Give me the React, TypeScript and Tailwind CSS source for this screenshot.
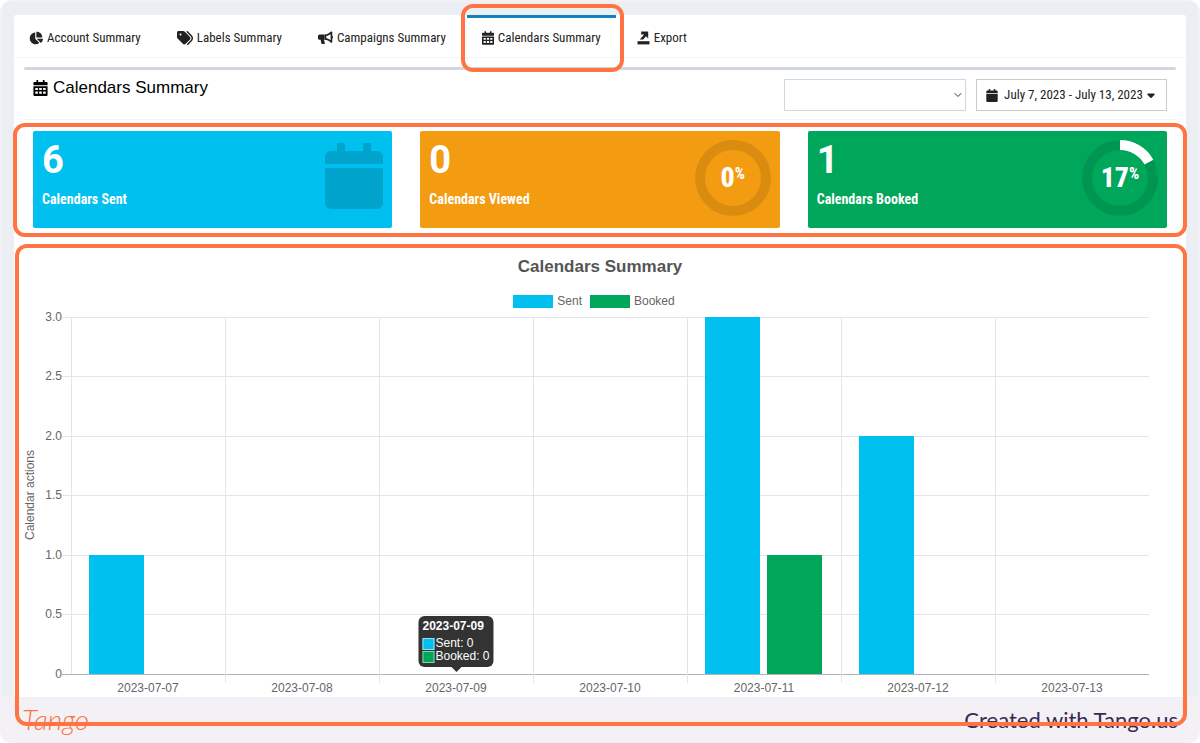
import React from "react";
import { FaBullhorn, FaCaretDown, FaChartPie, FaTags } from "react-icons/fa6";
import { FiChevronDown } from "react-icons/fi";

const condensed = "font-['Roboto_Condensed','Liberation_Sans_Narrow',Roboto,sans-serif]";

function ExportIcon() {
  return (
    <svg viewBox="0 0 13 14" className="h-3.5 w-[13px]" fill="currentColor" aria-hidden="true">
      <path d="M0.5 10.2h12v3.2h-12z" />
      <path d="M4.2 0.4h7v7L9 5.3 6.2 8.6H2.8l4.3-5.2H4.2z" />
    </svg>
  );
}

function BullhornIcon() {
  return <FaBullhorn className="size-3.5 -scale-x-100" />;
}

function MegaphoneIcon() {
  return (
    <svg viewBox="0 0 15 14" className="h-3.5 w-[15px]" fill="currentColor" aria-hidden="true">
      <path d="M1.6 3.4h5v5.4H6l.8 3.3a.8.8 0 0 1-.8 1H4.3a.9.9 0 0 1-.9-.7L2.6 8.8h-1A1.6 1.6 0 0 1 0 7.2V5a1.6 1.6 0 0 1 1.600-1.6z" />
      <path
        fillRule="evenodd"
        d="M6.600 3.400C9 3.400 11 2.300 12.600.700a1 1 0 0 1 1.700.7v3.500a1.400 1.400 0 0 1 0 2.500v3.400a1 1 0 0 1-1.700.7C11 9.900 9 8.800 6.600 8.800zM8.300 5v2.300c1.600.2 3.100.9 4.300 1.900V3.100C11.400 4.100 9.900 4.800 8.300 5z"
      />
    </svg>
  );
}

function CalendarGridIcon({ className }: { className: string }) {
  return (
    <svg viewBox="0 0 15 17" className={className} fill="currentColor" aria-hidden="true">
      <path
        fillRule="evenodd"
        d="M3.2 0h1.8v2h5V0h1.8v2h2.2a1 1 0 0 1 1 1v2.7H0V3a1 1 0 0 1 1-1h2.2zM0 6.7h15V16a1 1 0 0 1-1 1H1a1 1 0 0 1-1-1zM2 8.4v2.3h2.7V8.4zM6.1 8.4v2.3h2.8V8.4zM10.3 8.4v2.3H13V8.4zM2 12.3v2.4h2.7v-2.4zM6.1 12.3v2.4h2.8v-2.4zM10.3 12.3v2.4H13v-2.4z"
      />
    </svg>
  );
}

function CalendarIcon({ className }: { className: string }) {
  return (
    <svg viewBox="0 0 58 66" className={className} fill="currentColor" aria-hidden="true">
      <path d="M13 0h6a1 1 0 0 1 1 1v7h18V1a1 1 0 0 1 1-1h6a1 1 0 0 1 1 1v7h6a6 6 0 0 1 6 6v7H0v-7a6 6 0 0 1 6-6h6V1a1 1 0 0 1 1-1zM0 25h58v35a6 6 0 0 1-6 6H6a6 6 0 0 1-6-6z" />
    </svg>
  );
}

function Highlight({ className }: { className: string }) {
  return (
    <div
      aria-hidden="true"
      className={`pointer-events-none absolute z-10 rounded-xl border-4 border-[#ff7442] ${className}`}
    />
  );
}

const tabs = [
  { label: "Account Summary", icon: <FaChartPie className="size-3.5" /> },
  { label: "Labels Summary", icon: <FaTags className="size-4" /> },
  { label: "Campaigns Summary", icon: <MegaphoneIcon /> },
  { label: "Calendars Summary", icon: <CalendarGridIcon className="h-3.5 w-3" />, active: true },
  { label: "Export", icon: <ExportIcon /> },
];

function Tabs() {
  return (
    <nav className="flex gap-[6px] border-b border-[#f4f4f4]">
      {tabs.map((tab) => (
        <div key={tab.label} className="relative">
          <a
            href="#"
            aria-current={tab.active ? "page" : undefined}
            className={`flex h-[42px] items-center gap-1 border-t-3 px-[15px] text-[13px] whitespace-nowrap text-[#222] ${
              tab.active ? "-mb-px border-t-[#1182bd] bg-white" : "border-t-transparent"
            }`}
          >
            {tab.icon}
            {tab.label}
          </a>
          {tab.active && <Highlight className="-top-[11px] -right-2 -bottom-[15px] -left-[6px]" />}
        </div>
      ))}
    </nav>
  );
}

function Gauge({ percent }: { percent: number }) {
  const length = 2 * Math.PI * 33;
  return (
    <div className="relative size-[76px]">
      <svg viewBox="0 0 76 76" className="size-full -rotate-90" fill="none" strokeWidth="10" aria-hidden="true">
        <circle cx="38" cy="38" r="33" stroke="#000" strokeOpacity="0.1" />
        {percent > 0 && (
          <circle cx="38" cy="38" r="33" stroke="#fff" strokeDasharray={`${(length * percent) / 100} ${length}`} />
        )}
      </svg>
      <div className="absolute inset-0 flex items-center justify-center pb-px text-[28px] font-extrabold text-white">
        {percent}
        <sup className="-top-1 text-base">%</sup>
      </div>
    </div>
  );
}

const stats = [
  { value: 6, label: "Calendars Sent", color: "bg-[#00c0ef]" },
  { value: 0, label: "Calendars Viewed", color: "bg-[#f39c12]", percent: 0 },
  { value: 1, label: "Calendars Booked", color: "bg-[#00a65a]", percent: 17 },
];

function Stats() {
  return (
    <section className="relative mt-[11px] grid grid-cols-3 gap-7 px-[9px]">
      {stats.map((s) => (
        <div key={s.label} className={`flex h-[97px] justify-between rounded-xs px-[9px] pt-[9px] text-white ${s.color}`}>
          <div>
            <div className="font-[Roboto,sans-serif] text-[38px] leading-10 font-bold">{s.value}</div>
            <div className="mt-[9px] text-sm font-bold">{s.label}</div>
          </div>
          {s.percent === undefined ? (
            <CalendarIcon className="mt-[3px] h-[66px] w-[58px] text-[#00a3cb]" />
          ) : (
            <Gauge percent={s.percent} />
          )}
        </div>
      ))}
      <Highlight className="-inset-x-[11px] -top-[8px] -bottom-[9px]" />
    </section>
  );
}

const days = [
  { date: "2023-07-07", sent: 1, booked: 0 },
  { date: "2023-07-08", sent: 0, booked: 0 },
  { date: "2023-07-09", sent: 0, booked: 0 },
  { date: "2023-07-10", sent: 0, booked: 0 },
  { date: "2023-07-11", sent: 3, booked: 1 },
  { date: "2023-07-12", sent: 2, booked: 0 },
  { date: "2023-07-13", sent: 0, booked: 0 },
];
const ticks = ["0", "0.5", "1.0", "1.5", "2.0", "2.5", "3.0"];
const LEFT = 47;
const STEP = 154;
const BASE = 365;
const UNIT = 119;

function Chart() {
  return (
    <svg
      viewBox="0 0 1152 388"
      className="block w-full overflow-visible fill-[#666] font-['Liberation_Sans',Arial,sans-serif] text-xs"
      role="img"
      aria-label="Calendar actions per day"
    >
      {ticks.map((t, i) => {
        const y = Math.floor(BASE - (i * UNIT) / 2);
        return (
          <g key={t}>
            <line x1={LEFT - 9} x2={LEFT + 7 * STEP} y1={y + 0.5} y2={y + 0.5} stroke={i ? "#e5e5e5" : "#b3b3b3"} />
            <text x={LEFT - 9} y={y + 4} textAnchor="end">{t}</text>
          </g>
        );
      })}
      {days.map((d, i) => {
        const x = LEFT + i * STEP;
        return (
          <g key={d.date}>
            <line x1={x + 0.5} x2={x + 0.5} y1={BASE - 3 * UNIT} y2={i ? BASE + 9 : BASE} stroke="#e5e5e5" />
            <rect x={x + 18} y={BASE - d.sent * UNIT} width="55" height={d.sent * UNIT} fill="#00c0ef" />
            <rect x={x + 80} y={BASE - d.booked * UNIT} width="55" height={d.booked * UNIT} fill="#00a65a" />
            <text x={x + STEP / 2} y={BASE + 18} textAnchor="middle">{d.date}</text>
          </g>
        );
      })}
      <text transform="translate(10 186) rotate(-90)" textAnchor="middle">Calendar actions</text>
    </svg>
  );
}

function Tooltip() {
  return (
    <div className="absolute bottom-[30px] left-[37.5%] -translate-x-1/2 rounded-md bg-[#333] px-1 py-1 text-xs leading-[13px] whitespace-nowrap text-white">
      <div className="mb-1 font-bold">2023-07-09</div>
      <div className="flex items-center gap-px">
        <span className="size-3 border border-[#9fdcf0] bg-[#00c0ef]" />
        Sent: 0
      </div>
      <div className="flex items-center gap-px">
        <span className="size-3 border border-[#8fd0ae] bg-[#00a65a]" />
        Booked: 0
      </div>
      <span className="absolute top-full left-1/2 -translate-x-1/2 border-x-[5px] border-t-[5px] border-x-transparent border-t-[#333]" />
    </div>
  );
}

export default function App() {
  return (
    <div className={`rounded-xl bg-[#f3f0f6] px-0.5 pt-0.5 text-[#222] ${condensed}`}>
      <div className="rounded-t-lg bg-[#ebeef3] px-3 pt-[13px]">
        <main className="rounded-t-xs bg-white">
          <Tabs />
          <div className="px-[10px] pt-[9px]">
            <header className="flex h-[53px] items-start justify-between rounded-t-xs border-t-3 border-b border-t-[#d2d6de] border-b-[#f4f4f4] px-[9px]">
              <h1 className="mt-[6px] flex items-center gap-[5px] font-['Liberation_Sans',Arial,sans-serif] text-[17px] leading-6 text-black">
                <CalendarGridIcon className="h-4 w-[15px]" />
                Calendars Summary
              </h1>
              <div className="mt-[9px] flex gap-[10px]">
                <div className="relative">
                  <select aria-label="Calendar" className="h-8 w-[182px] appearance-none border border-[#d2d6de] bg-white px-3">
                    <option></option>
                  </select>
                  <FiChevronDown className="pointer-events-none absolute top-[10px] right-0.5 size-3 text-[#333]" />
                </div>
                <button type="button" className="flex h-8 w-[191px] items-center border border-[#ccc] px-[9px] text-[13px] whitespace-nowrap">
                  <CalendarIcon className="mr-1 h-[13px] w-3" />
                  <span className="flex-1 text-center">July 7, 2023 - July 13, 2023</span>
                  <FaCaretDown className="size-3" />
                </button>
              </div>
            </header>
            <Stats />
            <section className="relative mt-[26px] font-['Liberation_Sans',Arial,sans-serif]">
              <h2 className="pt-px text-center text-[17px] leading-6 font-bold text-[#555]">Calendars Summary</h2>
              <div className="mt-[14px] flex items-center justify-center gap-2 pr-3 text-xs leading-4 text-[#666]">
                <span className="h-[13px] w-10 bg-[#00c0ef]" />
                <span className="-ml-1">Sent</span>
                <span className="h-[13px] w-10 bg-[#00a65a]" />
                <span className="-ml-1">Booked</span>
              </div>
              <div className="relative">
                <Chart />
                <Tooltip />
              </div>
              <Highlight className="-top-[10px] -right-[11px] -bottom-[29px] -left-[9px]" />
            </section>
          </div>
        </main>
      </div>
      <footer className="flex h-[46px] items-center justify-between px-5 pb-0.5 font-[Lato,sans-serif]">
        <span className="text-[28px] font-light text-[#ff7442] italic">Tango</span>
        <span className="text-[22px] text-[#3a2a52]">Created with Tango.us</span>
      </footer>
    </div>
  );
}
